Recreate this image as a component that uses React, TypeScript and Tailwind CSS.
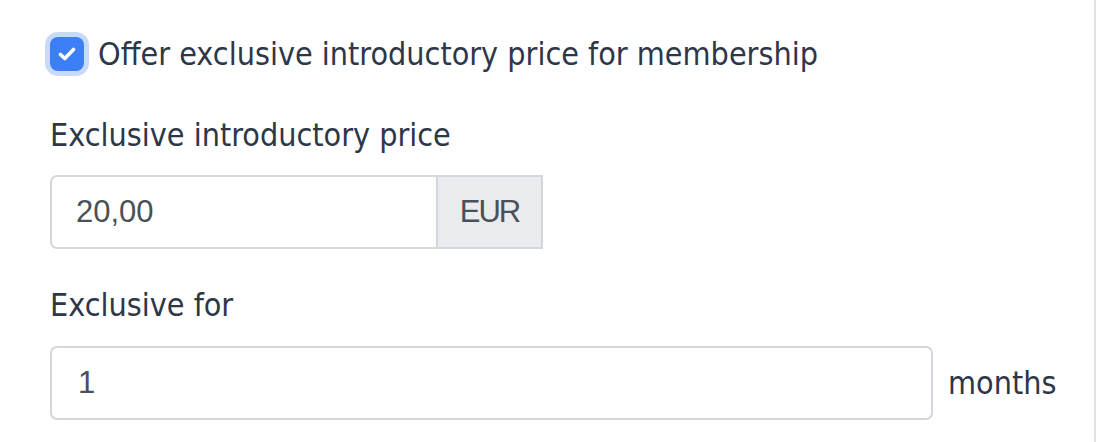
export default function App() {
  return (
    <div className="h-[442px] w-[1096px] border-r-2 border-[#e2e2e2] bg-white pl-[50px] pt-[30px] font-['DejaVu_Sans_Condensed',sans-serif] text-[32px] leading-[48px] text-[#2d3748]">
      <label className="flex items-center gap-[14px]">
        <span className="flex h-[34px] w-[34px] items-center justify-center rounded-[8px] bg-[#3b7ef6] shadow-[0_0_0_5px_#c8dafc]">
          <svg width="18" height="14" viewBox="0 0 18 14" fill="none">
            <path d="M2.5 7.5L6.8 11.5L15.5 2.5" stroke="white" strokeWidth="3.6" strokeLinecap="round" strokeLinejoin="round" />
          </svg>
        </span>
        <span className="whitespace-nowrap">Offer exclusive introductory price for membership</span>
      </label>

      <div className="mt-[33px]">Exclusive introductory price</div>
      <div className="mt-4 flex h-[74px] w-[493px] font-['Liberation_Sans',sans-serif] text-[31px] text-[#495057]">
        <div className="flex flex-1 items-center rounded-l-[7px] border-2 border-r-0 border-[#d3d7dc] pl-[24px]">20,00</div>
        <div className="flex w-[107px] items-center justify-center border-2 border-[#d3d7dc] bg-[#e9ebee] tracking-[-2px]">EUR</div>
      </div>

      <div className="mt-8">Exclusive for</div>
      <div className="mt-[17px] flex items-center gap-[15px]">
        <div className="flex h-[74px] w-[883px] items-center rounded-[7px] border-2 border-[#d3d7dc] pl-[26px] font-['Liberation_Sans',sans-serif] text-[31px] text-[#495057]">1</div>
        <span>months</span>
      </div>
    </div>
  );
}
